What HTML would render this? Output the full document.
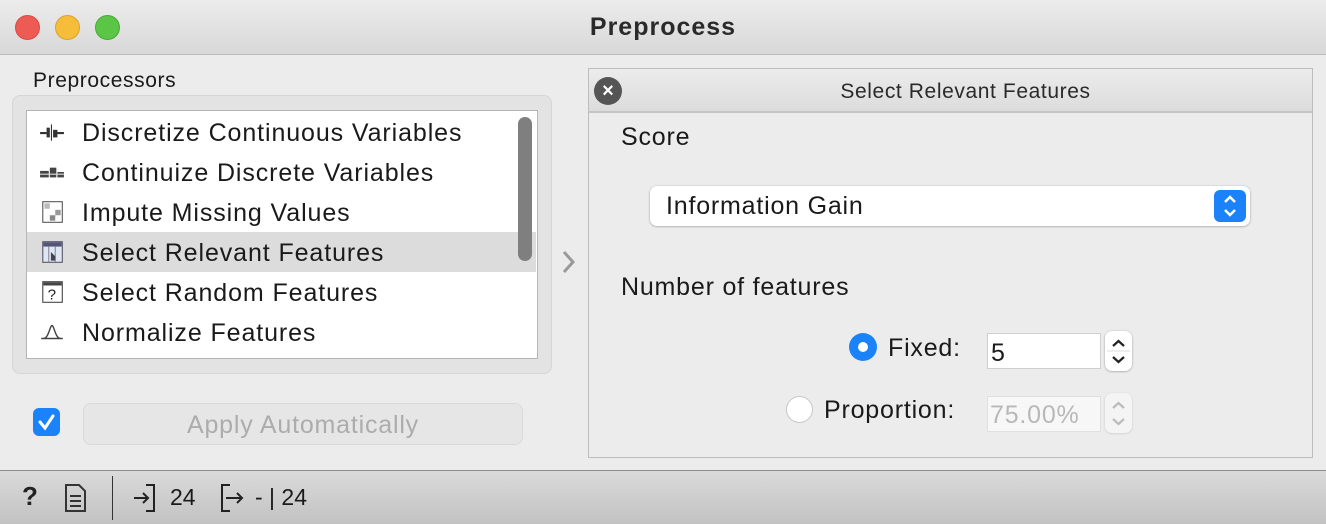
<!DOCTYPE html>
<html><head><meta charset="utf-8"><style>
*{box-sizing:border-box;margin:0;padding:0}
body{width:1326px;height:524px;overflow:hidden;background:#ececec;font-family:"Liberation Sans",sans-serif;color:#1a1a1a;position:relative}
.a{position:absolute}
.t{font-size:25px;letter-spacing:0.8px}
.title{left:0;top:0;width:1326px;height:55px;background:linear-gradient(#ececec,#d8d8d8);border-bottom:1px solid #bdbdbd;text-align:center;font-weight:bold;font-size:25px;letter-spacing:1px;line-height:55px;color:#2a2a2a}
.dot{width:25px;height:25px;border-radius:50%;top:15px}
.row{left:0;width:509px;height:40px;font-size:25px;letter-spacing:0.9px;line-height:42px;padding-left:55px}
.ic{left:12px;top:9px;width:26px;height:22px}
</style></head><body>
<div class="a title">Preprocess</div>
<div class="a dot" style="left:15px;background:#ee5b55;border:1px solid #d84a44"></div>
<div class="a dot" style="left:55px;background:#f5bd3a;border:1px solid #dca22b"></div>
<div class="a dot" style="left:95px;background:#5bc646;border:1px solid #47a93a"></div>

<div class="a" style="left:33px;top:69px;font-size:21px;letter-spacing:0.6px">Preprocessors</div>
<div class="a" style="left:12px;top:95px;width:540px;height:279px;background:#e3e3e3;border:1px solid #d6d6d6;border-radius:8px"></div>
<div class="a" style="left:26px;top:110px;width:512px;height:249px;background:#fff;border:1px solid #b5b5b5;overflow:hidden">
 <div class="a row" style="top:1px">Discretize Continuous Variables
  <svg class="a ic" viewBox="0 0 24 20"><path d="M1 11h6M17 11h6" stroke="#333" stroke-width="2"/><rect x="7" y="6" width="3" height="9" fill="#333"/><rect x="13" y="8" width="4" height="7" fill="#333"/><path d="M11.5 3v15" stroke="#333"/></svg></div>
 <div class="a row" style="top:41px">Continuize Discrete Variables
  <svg class="a ic" viewBox="0 0 24 20"><rect x="1" y="9" width="8" height="6" fill="#444"/><rect x="10" y="6" width="6" height="9" fill="#444"/><rect x="17" y="10" width="6" height="5" fill="#444"/><path d="M1 12h22" stroke="#ddd"/></svg></div>
 <div class="a row" style="top:81px">Impute Missing Values
  <svg class="a ic" viewBox="0 0 24 20"><rect x="3.5" y="0.5" width="18" height="19" fill="#fff" stroke="#555"/><rect x="5" y="2" width="5" height="5" fill="#bbb"/><rect x="15" y="8" width="5" height="5" fill="#999"/><rect x="10" y="13" width="5" height="5" fill="#888"/></svg></div>
 <div class="a row" style="top:121px;background:#dcdcdc">Select Relevant Features
  <svg class="a ic" viewBox="0 0 24 20"><rect x="3.5" y="0.5" width="18" height="19" fill="#dfe8f2" stroke="#556"/><rect x="4" y="1" width="17" height="4" fill="#557"/><path d="M9 5v14M15 5v14" stroke="#889"/><path d="M11 10v8h4v-4z" fill="#445"/></svg></div>
 <div class="a row" style="top:161px">Select Random Features
  <svg class="a ic" viewBox="0 0 24 20"><rect x="3.5" y="0.5" width="18" height="19" fill="#fff" stroke="#444"/><rect x="4" y="1" width="17" height="3" fill="#444"/><text x="8" y="17" font-size="14" font-family="Liberation Sans" fill="#222">?</text></svg></div>
 <div class="a row" style="top:201px">Normalize Features
  <svg class="a ic" viewBox="0 0 24 20"><path d="M2 16h20M4 16C9 16 10 4 12 4S15 16 20 16" fill="none" stroke="#444" stroke-width="1.3"/></svg></div>
 <div class="a" style="left:491px;top:6px;width:14px;height:144px;background:#7f7f7f;border-radius:7px"></div>
</div>
<svg class="a" style="left:560px;top:249px" width="18" height="26"><path d="M4 3l9 10-9 10" fill="none" stroke="#9a9a9a" stroke-width="3"/></svg>

<div class="a" style="left:33px;top:408px;width:27px;height:28px;background:#1a82fb;border-radius:6px"><svg width="27" height="28"><path d="M7 14l5 6 8-12" fill="none" stroke="#fff" stroke-width="3" stroke-linecap="round"/></svg></div>
<div class="a t" style="left:83px;top:403px;width:440px;height:42px;border:1px solid #dadada;border-radius:8px;background:#e6e6e6;text-align:center;line-height:42px;color:#acacac">Apply Automatically</div>

<div class="a" style="left:588px;top:68px;width:725px;height:390px;border:1px solid #bdbdbd;background:#ececec"></div>
<div class="a" style="left:589px;top:69px;width:723px;height:44px;background:linear-gradient(#ececec,#dcdcdc);border-bottom:2px solid #c4c4c4;text-align:center;font-size:21px;letter-spacing:0.6px;line-height:46px;color:#2a2a2a;padding-left:30px">Select Relevant Features</div>
<div class="a" style="left:594px;top:77px;width:28px;height:28px;border-radius:50%;background:#555;color:#fff;text-align:center;line-height:28px;font-weight:bold;font-size:20px">×</div>
<div class="a t" style="left:621px;top:123px">Score</div>
<div class="a t" style="left:650px;top:186px;width:600px;height:40px;background:#fff;border-radius:7px;box-shadow:0 0.5px 2px rgba(0,0,0,.35);line-height:41px;padding-left:16px">Information Gain</div>
<div class="a" style="left:1214px;top:190px;width:32px;height:32px;background:#1a82fb;border-radius:6px"><svg width="32" height="32"><path d="M11 12l5-5 5 5M11 20l5 5 5-5" fill="none" stroke="#fff" stroke-width="2.5"/></svg></div>
<div class="a t" style="left:621px;top:273px">Number of features</div>
<div class="a" style="left:849px;top:333px;width:28px;height:28px;border-radius:50%;background:#1a82fb"><div class="a" style="left:9px;top:9px;width:10px;height:10px;border-radius:50%;background:#fff"></div></div>
<div class="a t" style="left:888px;top:334px">Fixed:</div>
<div class="a t" style="left:987px;top:333px;width:114px;height:36px;background:#fff;border:1px solid #cfcfcf;line-height:38px;padding-left:3px">5</div>
<div class="a" style="left:1105px;top:331px;width:27px;height:40px;background:#fff;border-radius:7px;box-shadow:0 0.5px 2px rgba(0,0,0,.35)"><svg width="27" height="40"><path d="M8 15l5.5-5 5.5 5M8 26l5.5 5 5.5-5" fill="none" stroke="#222" stroke-width="2.2"/><path d="M2 20h23" stroke="#ddd"/></svg></div>
<div class="a" style="left:786px;top:396px;width:27px;height:27px;border-radius:50%;background:#fff;border:1px solid #c6c6c6"></div>
<div class="a t" style="left:824px;top:396px">Proportion:</div>
<div class="a t" style="left:987px;top:396px;width:114px;height:36px;background:#f7f7f7;border:1px solid #e0e0e0;line-height:36px;padding-left:2px;color:#b8b8b8">75.00%</div>
<div class="a" style="left:1105px;top:393px;width:27px;height:40px;background:#f4f4f4;border-radius:7px;box-shadow:0 0.5px 2px rgba(0,0,0,.15)"><svg width="27" height="40"><path d="M8 15l5.5-5 5.5 5M8 26l5.5 5 5.5-5" fill="none" stroke="#bbb" stroke-width="2.2"/></svg></div>

<div class="a" style="left:0;top:470px;width:1326px;height:54px;background:linear-gradient(#dadada,#c2c2c2);border-top:1px solid #8e8e8e"></div>
<div class="a" style="left:22px;top:481px;font-size:26px;font-weight:bold;color:#222">?</div>
<svg class="a" style="left:64px;top:484px" width="24" height="28"><path d="M2 1h13l6 6v20H2z" fill="none" stroke="#333" stroke-width="2"/><path d="M6 12h11M6 17h11M6 22h11" stroke="#333" stroke-width="2"/></svg>
<div class="a" style="left:112px;top:476px;width:1px;height:44px;background:#333"></div>
<svg class="a" style="left:132px;top:483px" width="30" height="30"><path d="M14 2h8v26h-8" fill="none" stroke="#222" stroke-width="2"/><path d="M2 15h14M11 10l5 5-5 5" fill="none" stroke="#222" stroke-width="2"/></svg>
<div class="a" style="left:170px;top:484px;font-size:23px">24</div>
<svg class="a" style="left:218px;top:483px" width="30" height="30"><path d="M12 2H4v26h8" fill="none" stroke="#222" stroke-width="2"/><path d="M8 15h16M19 10l5 5-5 5" fill="none" stroke="#222" stroke-width="2"/></svg>
<div class="a" style="left:255px;top:484px;font-size:23px">- | 24</div>
</body></html>
